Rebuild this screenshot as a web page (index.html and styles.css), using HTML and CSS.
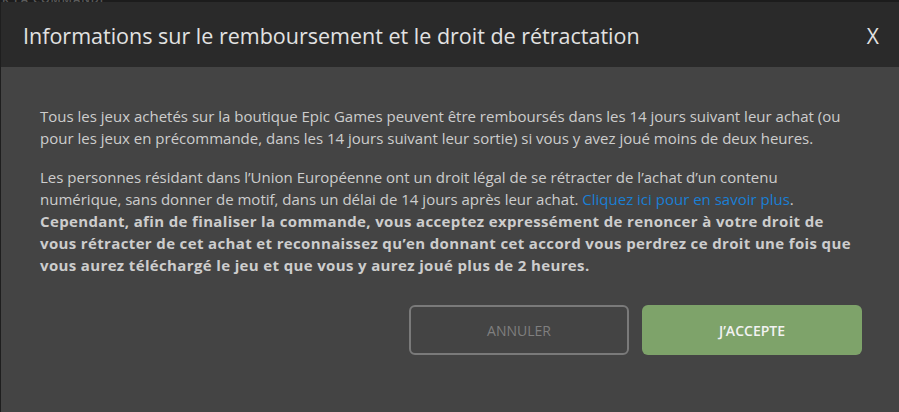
FILE: index.html
```html
<!DOCTYPE html>
<html lang="fr">
<head>
<meta charset="utf-8">
<link rel="stylesheet" href="styles.css">
</head>
<body>
<div class="backdrop"><span class="behind">R LA COMMANDE</span></div>
<div class="modal">
  <header class="modal-header">
    <h1 class="modal-title">Informations sur le remboursement et le droit de rétractation</h1>
    <span class="close">X</span>
  </header>
  <div class="modal-body">
    <p>Tous les jeux achetés sur la boutique Epic Games peuvent être remboursés dans les 14 jours suivant leur achat (ou pour les jeux en précommande, dans les 14 jours suivant leur sortie) si vous y avez joué moins de deux heures.</p>
    <p>Les personnes résidant dans l’Union Européenne ont un droit légal de se rétracter de l’achat d’un contenu numérique, sans donner de motif, dans un délai de 14 jours après leur achat. <a class="link" href="#">Cliquez ici pour en savoir plus</a>. <strong>Cependant, afin de finaliser la commande, vous acceptez expressément de renoncer à votre droit de vous rétracter de cet achat et reconnaissez qu’en donnant cet accord vous perdrez ce droit une fois que vous aurez téléchargé le jeu et que vous y aurez joué plus de 2 heures.</strong></p>
    <div class="actions">
      <button class="btn btn-cancel">ANNULER</button>
      <button class="btn btn-accept">J’ACCEPTE</button>
    </div>
  </div>
</div>
</body>
</html>
```

FILE: styles.css
```css
html, body {
  margin: 0;
  padding: 0;
  background: #444444;
  font-family: "Open Sans", "Liberation Sans", sans-serif;
}
.backdrop {
  height: 2px;
  background: #1c1c1c;
  overflow: hidden;
  position: relative;
}
.behind {
  position: absolute;
  left: 2px;
  top: -9px;
  font-size: 11px;
  font-weight: 600;
  color: #5a5a5a;
  letter-spacing: 1px;
}
.modal {
  height: 410px;
  border-left: 1px solid #1e1e1e;
  background: #444444;
  display: flex;
  flex-direction: column;
}
.modal-header {
  height: 65px;
  background: #2a2a2a;
  display: flex;
  align-items: center;
  justify-content: space-between;
  padding: 2px 20px 0 22px;
  box-sizing: border-box;
}
.modal-title {
  margin: 0;
  font-size: 21.5px;
  font-weight: 400;
  color: #e2e2e2;
}
.close {
  font-size: 21px;
  color: #e2e2e2;
}
.modal-body {
  padding: 38px 37px 0 39px;
  color: #cdcdcd;
  font-size: 15px;
  line-height: 22px;
}
.modal-body p {
  margin: 0 0 17px 0;
}
.modal-body strong {
  font-weight: 700;
  letter-spacing: 0.36px;
}
.link {
  color: #1a7fd4;
  text-decoration: none;
}
.actions {
  display: flex;
  justify-content: flex-end;
  gap: 13px;
  margin-top: 29px;
}
.btn {
  width: 220px;
  height: 50px;
  border-radius: 6px;
  font-family: "Open Sans", "Liberation Sans", sans-serif;
  font-size: 14px;
  box-sizing: border-box;
}
.btn-cancel {
  background: transparent;
  border: 2px solid #7a7a7a;
  color: #7f7f7f;
}
.btn-accept {
  background: #7ea36a;
  border: none;
  color: #f2f2f2;
  font-weight: 600;
}
```
